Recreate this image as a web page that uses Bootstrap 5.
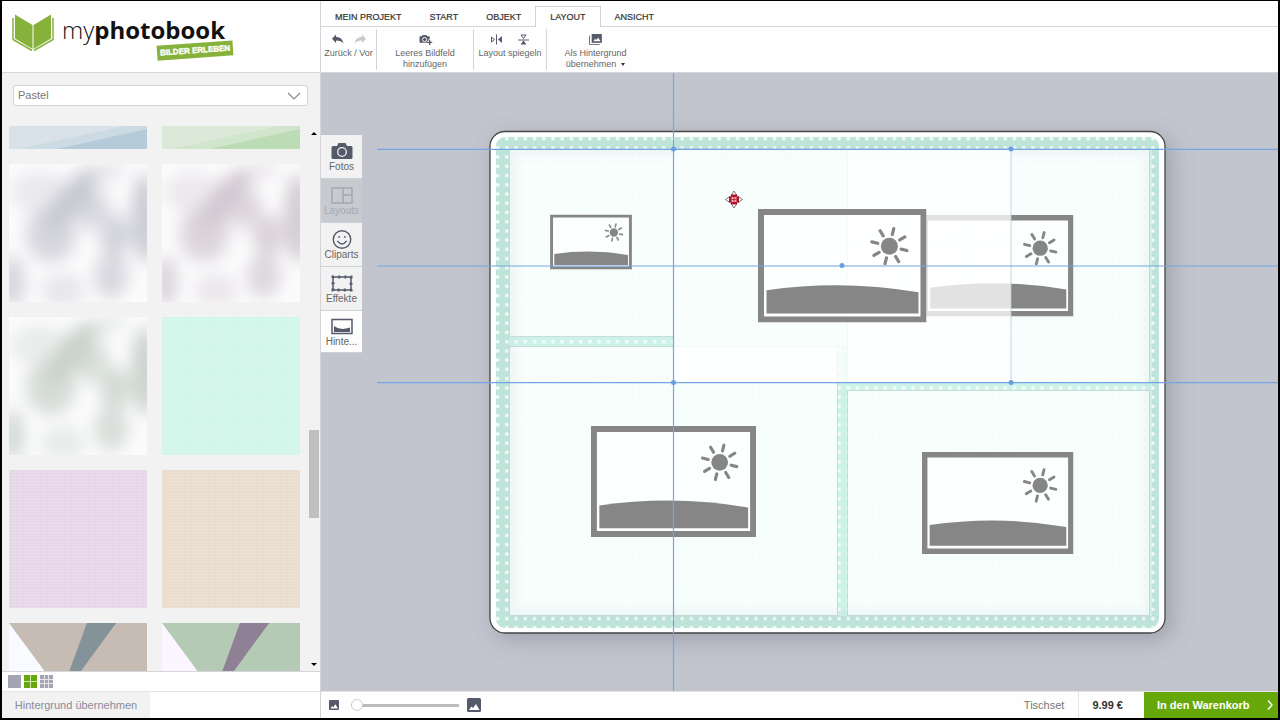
<!DOCTYPE html>
<html lang="de">
<head>
<meta charset="utf-8">
<meta name="viewport" content="width=device-width, initial-scale=1">
<title>myphotobook – Tischset gestalten</title>
<link href="https://cdn.jsdelivr.net/npm/bootstrap@5.3.0/dist/css/bootstrap.min.css" rel="stylesheet">
<style>
  :root { --ink: #555a6b; --line: #d4d4d9; --panel: #f2f2f2; --green: #66a80a; }
  body { font-family: "Liberation Sans", Arial, sans-serif; font-size: 11px; line-height: 11px; color: #777; }
  button { font: inherit; color: inherit; border: 0; background: none; padding: 0; }
  svg { display: block; }
  .app { border: solid #000; border-width: 1px 2px 2px 2px; background: #fefefe; }
  .sidebar { width: 319px; border-right: 1px solid var(--line); }
  .brand { height: 72px; border-bottom: 1px solid var(--line); padding: 12px 0 0 9px; text-decoration: none; color: #111; }
  .brand:hover { color: #111; }
  .wordmark { font: 300 24px/28px "Open Sans", sans-serif; margin: 3px 0 0 7px; }
  .wordmark b { font-weight: 700; }
  .slogan { position: absolute; right: -8px; top: 27px; background: #86b23b; color: #fff; font: 700 8px/15px "Liberation Sans", Arial, sans-serif; padding: 0 3px; transform: rotate(-4deg); white-space: nowrap; -webkit-text-stroke: 0.4px #fff; }
  .panel { background: var(--panel); }
  .filter { padding: 12px 12px 20px 11px; }
  .filter .form-select { height: 21px; font-size: 11px; line-height: 11px; color: #777; padding: 0 24px 0 4px; border-color: #d3d3d8; border-radius: 3px;
    background: #fff url("data:image/svg+xml,%3Csvg xmlns='http://www.w3.org/2000/svg' viewBox='0 0 14 8'%3E%3Cpath d='M1 1l6 6 6-6' fill='none' stroke='%23888' stroke-width='1.2'/%3E%3C/svg%3E") no-repeat right 6px center / 14px 8px; }
  .tiles { padding: 0 8px 0 7px; overflow: hidden; min-width: 0; }
  .tilegrid { display: grid; grid-template-columns: 1fr 1fr; gap: 15px; margin-top: -115px; }
  .tile { aspect-ratio: 1; overflow: hidden; }
  .weave { background-image: repeating-linear-gradient(0deg, #ffffff20 0 1px, transparent 1px 3px), repeating-linear-gradient(90deg, #ffffff20 0 1px, transparent 1px 3px); }
  .mint { background-color: #cff6e9; } .lilac { background-color: #e6d5e9; } .sand { background-color: #e9dccc; }
  .scroller { width: 12px; padding: 5px 1px 4px 0; }
  .thumb { width: 10px; height: 88px; background: #bfbfbf; }
  .sizes { height: 20px; padding: 0 6px; gap: 3px; border-top: 1px solid var(--line); }
  .apply { width: 148px; background: var(--panel); color: #8a8a9c; }
  .bottombar { height: 27px; border-top: 1px solid #e4e4e8; }
  .menu { height: 26px; padding-top: 5px; border-bottom: 1px solid var(--line); }
  .menu .nav-link { font-size: 9px; line-height: 9px; color: #333; padding: 7px 14px 4px; border: 0 solid var(--line); border-radius: 0; margin: 0; -webkit-text-stroke: 0.2px #333; }
  .menu .nav-link.active { border-width: 1px 1px 0; padding: 6px 14px; background: #fefefe; height: 21px; color: #333; }
  .tools { height: 46px; border-bottom: 1px solid var(--line); }
  .tool { border-right: 1px solid var(--line); padding-top: 5px; margin: 2px 0; font-size: 9px; line-height: 11px; gap: 3px; color: #666; }
  .tool.w-a { width: 56px; } .tool.w-b { width: 97px; } .tool.w-c { width: 73px; }
  .stage { background: #c2c5ce; }
  .modes { width: 41px; margin: 62px 15px 0 0; }
  .modes .nav-link { height: 44px; padding: 7px 0 0; border-radius: 0; font-size: 10px; line-height: 12px; color: #666; background: var(--panel); border-bottom: 1px solid #cfd1d8; text-align: center; }
  .modes .nav-link svg { margin: 0 auto; color: var(--ink); }
  .modes .nav-link.disabled { background: #c7cbd0; color: #a4a8b3; }
  .modes .nav-link.disabled svg { color: #a4a8b3; }
  .modes .nav-link.active { background: #fdfdfd; color: #666; height: 42px; padding-top: 6px; }
  .zoomer { width: 108px; height: 12px; appearance: none; background: linear-gradient(#bbb, #bbb) no-repeat center / 100% 3px; }
  .zoomer::-webkit-slider-thumb { appearance: none; width: 12px; height: 12px; border-radius: 50%; background: #fff; border: 1px solid #ccc; }
  .product { padding: 0 14px; border-right: 1px solid #e4e4e8; }
  .price { padding: 0 21px 0 13px; color: #333; }
  .cart { width: 134px; background: var(--green); color: #fff; padding: 0 4px 0 13px; }
</style>
</head>
<body>
<svg width="0" height="0" class="position-absolute" aria-hidden="true">
  <defs>
    <filter id="soft" x="-40%" y="-40%" width="180%" height="180%"><feGaussianBlur stdDeviation="8"/></filter>
    <symbol id="clouds" viewBox="0 0 138 138">
      <rect width="138" height="138" fill="#fbfbfc"/>
      <g fill="currentColor" filter="url(#soft)">
        <ellipse cx="30" cy="28" rx="28" ry="20" opacity=".35"/>
        <ellipse cx="62" cy="36" rx="14" ry="38" transform="rotate(38 62 36)"/>
        <ellipse cx="84" cy="46" rx="15" ry="20" transform="rotate(25 84 46)" opacity=".7"/>
        <ellipse cx="42" cy="70" rx="25" ry="28" opacity=".75"/>
        <ellipse cx="92" cy="10" rx="26" ry="9" transform="rotate(-20 92 10)" opacity=".4"/>
        <ellipse cx="106" cy="72" rx="15" ry="22" opacity=".8"/>
        <ellipse cx="136" cy="54" rx="14" ry="44" opacity=".95"/>
        <ellipse cx="102" cy="112" rx="17" ry="22" opacity=".7"/>
        <ellipse cx="4" cy="118" rx="11" ry="26" opacity=".8"/>
        <ellipse cx="54" cy="126" rx="22" ry="16" opacity=".4"/>
      </g>
    </symbol>
    <symbol id="slope" viewBox="0 0 138 138">
      <rect width="138" height="138" fill="currentColor" opacity=".4"/>
      <path d="M10 138L138 110v28z" fill="currentColor" opacity=".35"/>
      <path d="M48 138L138 118v20z" fill="currentColor"/>
    </symbol>
    <symbol id="picture" viewBox="0 0 168 113">
      <path d="M3 3h162v107H3z" fill="#fff" fill-opacity=".5" stroke="#868686" stroke-width="6"/>
      <path d="M8.500 81Q84 70 160 83v21H8.500z" fill="#868686"/>
      <circle cx="131" cy="37" r="8.500" fill="#868686"/>
      <g transform="translate(131 37) rotate(14)" stroke="#868686" stroke-width="3.200" stroke-linecap="round">
        <path d="M0-12v-6M0 12v6M12 0h6M-12 0h-6M8.500-8.500l4.200-4.200M-8.500 8.500l-4.200 4.200M8.500 8.500l4.200 4.200M-8.500-8.500l-4.200-4.200"/>
      </g>
    </symbol>
    <symbol id="thumbpic" viewBox="0 0 14 14">
      <rect width="14" height="14" rx="1.500" fill="#555a6b"/>
      <path d="M2 12l2.500-3.500L6 10l3-4 3.500 6z" fill="#fff"/>
    </symbol>
  </defs>
</svg>

<div class="app d-flex vh-100 overflow-hidden">
  <aside class="sidebar d-flex flex-column flex-shrink-0">
    <a class="brand d-flex align-items-start flex-shrink-0" href="#" aria-label="myphotobook">
      <svg width="44" height="40" viewBox="0 0 44 40">
        <path d="M4 1.500L21.500 12v24L4 25.500zM40 1.500L22.500 12v24L40 25.500z" fill="#86b23b"/>
        <path d="M2 5v21.500L21 37.500M42 5v21.500L23 37.500" fill="none" stroke="#86b23b" stroke-width="1.500"/>
      </svg>
      <span class="wordmark position-relative">my<b>photobook</b><span class="slogan">BILDER ERLEBEN</span></span>
    </a>
    <div class="panel d-flex flex-column flex-fill overflow-hidden">
      <div class="filter">
        <select class="form-select" aria-label="Kategorie"><option>Pastel</option></select>
      </div>
      <div class="d-flex flex-fill overflow-hidden">
        <div class="tiles flex-fill">
          <div class="tilegrid">
            <button class="tile" aria-label="Blau diagonal" style="color:#b5cbd9"><svg class="w-100 h-100"><use href="#slope"/></svg></button>
            <button class="tile" aria-label="Grün diagonal" style="color:#bcdcb5"><svg class="w-100 h-100"><use href="#slope"/></svg></button>
            <button class="tile" aria-label="Wolken grau" style="color:#c9c9d3"><svg class="w-100 h-100"><use href="#clouds"/></svg></button>
            <button class="tile" aria-label="Wolken rosa" style="color:#d2c9d2"><svg class="w-100 h-100"><use href="#clouds"/></svg></button>
            <button class="tile" aria-label="Wolken grün" style="color:#c9d2cb"><svg class="w-100 h-100"><use href="#clouds"/></svg></button>
            <button class="tile weave mint" aria-label="Stoff mint"></button>
            <button class="tile weave lilac" aria-label="Stoff flieder"></button>
            <button class="tile weave sand" aria-label="Stoff sand"></button>
            <button class="tile" aria-label="Dreiecke braun"><svg class="w-100 h-100" viewBox="0 0 138 138"><path fill="#c6bcb4" d="M0 0h138v138H0z"/><path fill="#f8fbff" d="M0 0l102 138H0z"/><path fill="#84929a" d="M78 0h29L53 74z"/><path fill="#84929a" d="M78 0h29L70 49 60 49z"/></svg></button>
            <button class="tile" aria-label="Dreiecke grün"><svg class="w-100 h-100" viewBox="0 0 138 138"><path fill="#b5cab4" d="M0 0h138v138H0z"/><path fill="#fbf6ff" d="M0 0l102 138H0z"/><path fill="#908096" d="M78 0h29L53 74z"/><path fill="#908096" d="M78 0h29L70 49 60 49z"/></svg></button>
          </div>
        </div>
        <div class="scroller d-flex flex-column flex-shrink-0 align-items-center justify-content-between">
          <button aria-label="Nach oben"><svg width="6" height="4"><path d="M0 4l3-3 3 3z"/></svg></button>
          <div class="flex-fill d-flex flex-column">
            <div style="flex:294"></div><div class="thumb"></div><div style="flex:144"></div>
          </div>
          <button aria-label="Nach unten"><svg width="6" height="4"><path d="M0 0l3 3 3-3z"/></svg></button>
        </div>
      </div>
    </div>
    <div class="sizes d-flex align-items-center flex-shrink-0">
      <button aria-label="Große Kacheln"><svg width="13" height="13"><path fill="#a3a5b2" d="M0 0h13v13H0z"/></svg></button>
      <button aria-label="Mittlere Kacheln"><svg width="13" height="13"><path fill="#66a80a" d="M0 0h13v13H0z"/><path stroke="#cfe5b0" d="M6.500 0v13M0 6.500h13"/></svg></button>
      <button aria-label="Kleine Kacheln"><svg width="13" height="13"><path fill="#a3a5b2" d="M0 0h13v13H0z"/><path stroke="#e6e6ec" d="M4.500 0v13M8.500 0v13M0 4.500h13M0 8.500h13"/></svg></button>
    </div>
    <div class="bottombar d-flex flex-shrink-0"><button class="apply">Hintergrund übernehmen</button></div>
  </aside>

  <main class="d-flex flex-column flex-fill overflow-hidden">
    <ul class="menu nav flex-shrink-0">
      <li class="nav-item"><a class="nav-link" href="#">MEIN PROJEKT</a></li>
      <li class="nav-item"><a class="nav-link" href="#">START</a></li>
      <li class="nav-item"><a class="nav-link" href="#">OBJEKT</a></li>
      <li class="nav-item"><a class="nav-link active" href="#">LAYOUT</a></li>
      <li class="nav-item"><a class="nav-link" href="#">ANSICHT</a></li>
    </ul>
    <div class="tools d-flex flex-shrink-0 text-center">
      <div class="tool w-a d-flex flex-column align-items-center">
        <div class="d-flex gap-2">
          <button aria-label="Zurück"><svg width="14" height="11" viewBox="0 0 14 10"><path d="M5 0v2.500c4 0 6.500 2 7.500 6.500C11 7 8.500 6 5 6v2.500L1 4.200z" fill="#555a6b"/></svg></button>
          <button aria-label="Vor"><svg width="14" height="11" viewBox="0 0 14 10"><path d="M9 0v2.500C5 2.500 2.500 4.500 1.500 9 3 7 5.500 6 9 6v2.500l4-4.300z" fill="#c9cad0"/></svg></button>
        </div>
        <span class="text-nowrap">Zurück / Vor</span>
      </div>
      <button class="tool w-b d-flex flex-column align-items-center">
        <svg width="15" height="13" viewBox="0 0 15 12"><path d="M1 2.500h2.500L4.500 1h4l1 1.500H12V7h-1v2.500H1z" fill="#555a6b"/><circle cx="6.500" cy="6" r="2.300" fill="none" stroke="#fff"/><path d="M12 6v6M9 9h6" stroke="#fff" stroke-width="3"/><path d="M12 6.500V12M9.200 9.200h5.600" stroke="#555a6b" stroke-width="1.500"/></svg>
        <span>Leeres Bildfeld<br>hinzufügen</span>
      </button>
      <div class="tool w-c d-flex flex-column align-items-center">
        <div class="d-flex gap-3">
          <button aria-label="Horizontal spiegeln"><svg width="11" height="11" viewBox="0 0 11 10"><path d="M5.500 0v10" stroke="#555a6b"/><path d="M11 1.500v7L7 5z" fill="#555a6b"/><path d="M.5 2.500v5L3.500 5z" fill="none" stroke="#555a6b"/></svg></button>
          <button aria-label="Vertikal spiegeln"><svg width="11" height="11" viewBox="0 0 11 10"><path d="M0 5.500h11" stroke="#555a6b"/><path d="M2.500 10h6L5.500 6z" fill="#555a6b"/><path d="M3 .5h5L5.500 4z" fill="none" stroke="#555a6b"/></svg></button>
        </div>
        <span class="text-nowrap">Layout spiegeln</span>
      </div>
      <button class="tool w-b border-0 d-flex flex-column align-items-center">
        <svg width="15" height="13" viewBox="0 0 15 13"><path d="M3 0h12v10.500H3z" fill="#555a6b"/><path d="M.5 2v10.500h12" fill="none" stroke="#555a6b"/><path d="M5 8.500l2-3 1.500 1.500 2-3 3 4.500z" fill="#fff"/></svg>
        <span>Als Hintergrund<br>übernehmen &nbsp;<svg class="d-inline-block align-middle" width="4" height="3"><path d="M0 0h4L2 3z" fill="#333"/></svg></span>
      </button>
    </div>

    <div class="stage d-flex flex-fill overflow-hidden">
      <nav class="modes nav flex-column flex-nowrap flex-shrink-0">
        <a class="nav-link" href="#"><svg width="22" height="19" viewBox="0 0 22 19"><path d="M2 4h4l1.500-3h7L16 4h4q1.500 0 1.500 1.500v10Q21.500 17 20 17H2Q.5 17 .5 15.500v-10Q.5 4 2 4z" fill="currentColor"/><circle cx="11" cy="10" r="4.300" fill="none" stroke="#f2f2f2" stroke-width="1.300"/></svg>Fotos</a>
        <a class="nav-link disabled" href="#" aria-disabled="true"><svg width="22" height="19" viewBox="0 0 22 19" fill="none" stroke="currentColor" stroke-width="1.500"><path d="M1 2h20v15H1zM12 2v15M12 9h9"/></svg>Layouts</a>
        <a class="nav-link" href="#"><svg width="22" height="19" viewBox="0 0 22 20" fill="none" stroke="currentColor" stroke-width="1.500"><circle cx="11" cy="10" r="9.200"/><path d="M6 11.500q5 6.500 10 0"/><path d="M8 6.500v1.600M14 6.500v1.600" stroke-width="1.800"/></svg>Cliparts</a>
        <a class="nav-link" href="#"><svg width="22" height="19" viewBox="0 0 22 19" fill="none" stroke="currentColor"><path d="M2 3h18v13H2z" stroke-width="1.500"/><path d="M2 3h18v13H2z" stroke-width="3" stroke-dasharray="2 4.200" stroke-dashoffset="1"/></svg>Effekte</a>
        <a class="nav-link active" href="#"><svg width="22" height="19" viewBox="0 0 22 19"><path d="M1 2.500h20v14H1z" fill="none" stroke="currentColor" stroke-width="1.500"/><path d="M3 9q6 5 16 1.500V15H3z" fill="currentColor"/></svg>Hinte...</a>
      </nav>
      <svg class="flex-fill h-100" viewBox="377 73 901 618" role="img" aria-label="Tischset mit vier Bildfeldern">
        <defs>
          <pattern id="dots" x="493" y="134" width="9.230" height="9.230" patternUnits="userSpaceOnUse"><circle cx="4.600" cy="4.600" r="1.900" fill="#f4fdfa"/></pattern>
          <filter id="lift" x="-10%" y="-10%" width="125%" height="130%"><feDropShadow dx="6" dy="6" stdDeviation="11" flood-color="#667" flood-opacity=".4"/></filter>
          <filter id="edge"><feGaussianBlur stdDeviation="4"/></filter>
        </defs>
        <rect x="490" y="131.500" width="675" height="501.500" rx="15" fill="#fff" stroke="#444" stroke-width="1.300" filter="url(#lift)"/>
        <rect x="496" y="137" width="663" height="491" rx="9" fill="#bfe5da"/>
        <rect x="509" y="149" width="643" height="467" fill="#cdf3e8"/>
        <rect x="496" y="137" width="663" height="491" rx="9" fill="url(#dots)"/>
        <g fill="#fcffff" fill-opacity=".87" stroke="#c3d4d3" stroke-width=".8">
          <path d="M509.500 149.500h164v187h-164zM509.500 346.500h328v269h-328zM847.500 149.500h302v233h-302zM847.500 390.500h302v225h-302z"/>
        </g>
        <path d="M673 149.500h174v197H673z" fill="#e4f9f4" fill-opacity=".7"/>
        <g fill="none" stroke="#aebdc4" stroke-width="4" opacity=".28" filter="url(#edge)">
          <path d="M673 151H512v464h637V151H673"/>
        </g>
        <use href="#picture" x="550" y="214.500" width="82" height="55"/>
        <use href="#picture" x="591" y="426" width="165" height="111"/>
        <use href="#picture" x="922.500" y="215" width="151" height="101.500"/>
        <use href="#picture" x="922" y="452" width="151.500" height="102"/>
        <rect x="673.500" y="149" width="337.500" height="233.500" fill="#fff" fill-opacity=".76" stroke="#bccbe0" stroke-width=".8"/>
        <use href="#picture" x="758" y="209" width="168.500" height="113.500"/>
        <g stroke="#75a5e2" stroke-width="1.200">
          <path d="M673.500 73v618M377 149.300h901M377 266h901M377 382.700h901"/>
        </g>
        <g fill="#6a9de0"><circle cx="673.500" cy="149" r="2.500"/><circle cx="1011" cy="149" r="2.500"/><circle cx="842" cy="265.500" r="2.500"/><circle cx="673.500" cy="382.500" r="2.500"/><circle cx="1011" cy="382.500" r="2.500"/></g>
        <g transform="translate(734 199.500)">
          <path d="M0-8.500l3 4.500h-6zM0 8.500l3-4.500h-6zM-8.500 0l4.500-3v6zM8.500 0l-4.500-3v6z" fill="#fff" stroke="#555" stroke-width=".8"/>
          <path d="M-3-5h6v2h2v6h-2v2h-6v-2h-2v-6h2z" fill="#b3122a"/>
          <path d="M-2.500-2.500h5v5h-5z" fill="#e9aab3"/><path d="M0-2.500v5M-2.500 0h5" stroke="#b3122a" stroke-width=".7"/>
        </g>
      </svg>
    </div>

    <div class="bottombar d-flex align-items-stretch flex-shrink-0">
      <div class="d-flex align-items-center ps-2 me-auto">
        <svg width="10" height="10" class="me-2"><use href="#thumbpic" width="10" height="10"/></svg>
        <input class="zoomer m-0 ms-1" type="range" min="0" max="100" value="0" aria-label="Zoom">
        <svg width="14" height="14" class="ms-2"><use href="#thumbpic"/></svg>
      </div>
      <span class="product d-flex align-items-center">Tischset</span>
      <b class="price d-flex align-items-center">9.99 €</b>
      <button class="cart d-flex align-items-center justify-content-between fw-bold text-nowrap">In den Warenkorb
        <svg width="8" height="12" viewBox="0 0 8 12"><path d="M2 1.500L6 6l-4 4.500" fill="none" stroke="#fff" stroke-width="1.400"/></svg>
      </button>
    </div>
  </main>
</div>
<script src="https://cdn.jsdelivr.net/npm/bootstrap@5.3.0/dist/js/bootstrap.bundle.min.js"></script>
</body>
</html>
